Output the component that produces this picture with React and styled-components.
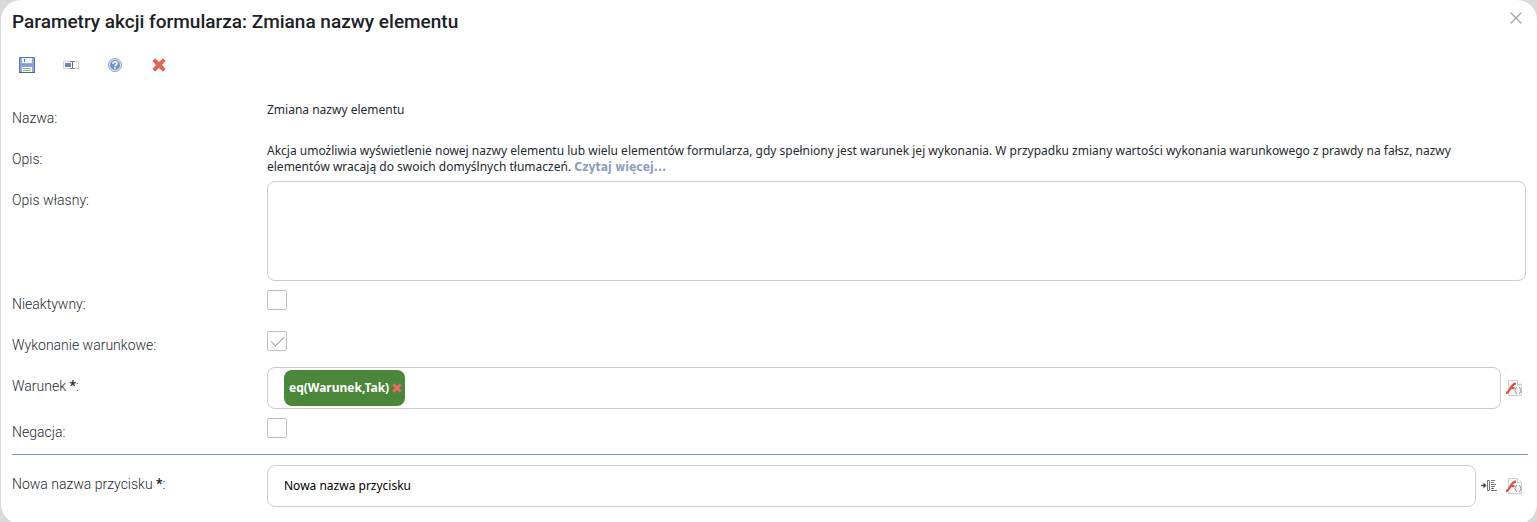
import React, { useState } from 'react';
import styled, { createGlobalStyle } from 'styled-components';

const GlobalStyle = createGlobalStyle`
  * {
    box-sizing: border-box;
  }

  body {
    margin: 0;
    background-color: #d9d9d9;
    color: #252a2e;
    font-family: 'Noto Sans', Tahoma, sans-serif;
    font-size: 12px;
    line-height: 16px;
  }
`;

const Dialog = styled.main`
  min-height: 100vh;
  margin-left: 1px;
  padding: 9px 9px 15px 11px;
  border-radius: 20px;
  background-color: #fff;
`;

const Header = styled.header`
  display: flex;
  justify-content: space-between;
  align-items: flex-start;
`;

const Title = styled.h1`
  margin: 0;
  font-family: Roboto, sans-serif;
  font-size: 19px;
  font-weight: 500;
  line-height: 26px;
  color: #1c2126;
`;

const IconButton = styled.button`
  display: flex;
  flex: none;
  padding: 0;
  border: 0;
  background: none;
  cursor: pointer;
`;

const CloseButton = styled(IconButton)`
  margin: 1px 4px;
`;

const Toolbar = styled.div`
  display: flex;
  gap: 28px;
  padding: 22px 7px 24px;
`;

const Row = styled.div`
  display: grid;
  grid-template-columns: 255px 1fr;
  min-height: 41px;
`;

const Label = styled.label`
  padding-top: 11px;
  font-family: Roboto, sans-serif;
  font-size: 14px;
  font-weight: 300;
  line-height: 20px;
`;

const Required = styled.b`
  font-weight: 700;
`;

const Value = styled.div`
  padding: 5px 24px 0 0;
`;

const Link = styled.a`
  color: #8a9fbe;
  font-family: 'DejaVu Sans Condensed', Verdana, sans-serif;
  font-weight: 700;
  line-height: 12px;
  text-decoration: none;
`;

const Field = styled.div`
  display: flex;
  align-items: center;
  gap: 9px;
  padding: 2px 6px 2px 0;
`;

const AreaField = styled.div`
  padding: 2px 2px 2px 0;
`;

const TextArea = styled.textarea`
  display: block;
  width: 100%;
  height: 100px;
  padding: 8px 16px;
  border: 1px solid #ccc;
  border-radius: 8px;
  font: inherit;
  resize: none;
`;

const Box = styled.div`
  display: flex;
  flex: 1;
  align-items: center;
  height: 42px;
  margin-right: -4px;
  padding: 0 16px;
  border: 1px solid #ccc;
  border-radius: 8px;
`;

const TextInput = styled.input`
  flex: 1;
  min-width: 0;
  padding: 0;
  border: 0;
  outline: 0;
  background: none;
  color: #000;
  font: inherit;
`;

const Chip = styled.span`
  display: flex;
  align-items: center;
  gap: 3px;
  height: 36px;
  padding: 0 3px 0 5px;
  border-radius: 8px;
  background-color: #4a873a;
  color: #fff;
  font-weight: 700;
`;

const CheckCell = styled.div`
  padding-top: 7px;
`;

const Checkbox = styled.input`
  display: grid;
  place-items: center;
  width: 20px;
  height: 20px;
  margin: 0;
  border: 1px solid #bfbfbf;
  border-radius: 2px;
  appearance: none;

  &:checked::before {
    content: '';
    width: 12px;
    height: 6px;
    margin-bottom: 4px;
    border: solid #a0a0a0;
    border-width: 0 0 1px 1px;
    transform: rotate(-45deg);
  }
`;

const Divider = styled.hr`
  height: 1px;
  margin: 2px 0 8px;
  border: 0;
  background-color: #8299bf;
`;

function CloseIcon() {
  return (
    <svg width="16" height="16" viewBox="0 0 16 16" fill="none" stroke="#a8a8a8" strokeWidth="1.4">
      <path d="M2.5 2.5 13.5 13.5M13.5 2.5 2.5 13.5" />
    </svg>
  );
}

function SaveIcon() {
  return (
    <svg width="16" height="16" viewBox="0 0 16 16">
      <path d="M1 0h14q1 0 1 1v14q0 1-1 1H1q-1 0-1-1V1q0-1 1-1z" fill="#5573bb" />
      <path d="M1 1h14v14H1z" fill="#8fa8de" />
      <path d="M3 1h10v5H3z" fill="#f4f7fd" />
      <path d="M5 2h1v3H5z" fill="#4b6cb9" />
      <path d="M2 7h12v2H2z" fill="#7f9ad6" />
      <path d="M3 10h10v5H3z" fill="#fafcf8" />
      <path d="M4 11h8v1H4zM4 13h8v1H4z" fill="#8fbf62" />
      <path d="M0 15h16v1H0z" fill="#4262ac" />
    </svg>
  );
}

function RenameIcon() {
  return (
    <svg width="16" height="16" viewBox="0 0 16 16">
      <path d="M.5 4.5h15v7H.5z" fill="#fff" stroke="#d0d0d0" />
      <path d="M2 6h6v4H2z" fill="#6683c2" />
      <path d="M7.5 4.5h1.5l.5.5.5-.5h1.5M9.5 5v6M7.5 11.5h1.5l.5-.5.5.5h1.5" fill="none" stroke="#666" />
    </svg>
  );
}

function HelpIcon() {
  return (
    <svg width="16" height="16" viewBox="0 0 16 16">
      <circle cx="8" cy="8" r="6.5" fill="#dde6f4" stroke="#8da1c6" />
      <circle cx="8" cy="8" r="5" fill="#7391c9" />
      <path d="M6 6.7C6 4.2 10 4.2 10 6.5 10 7.8 8 7.8 8 9.3" fill="none" stroke="#fff" strokeWidth="1.6" />
      <path d="M7.2 10.3h1.6v1.5H7.2z" fill="#fff" />
    </svg>
  );
}

function DeleteIcon({ size = 16, color = '#e2645b', edge = '#cf4a43', viewBox = '0 0 16 16' }) {
  return (
    <svg width={size} height={size} viewBox={viewBox}>
      <path
        d="M4 1.8 8 5.4 12 1.8 14.2 4 10.6 8 14.2 12 12 14.2 8 10.6 4 14.2 1.8 12 5.4 8 1.8 4z"
        fill={color}
        stroke={edge}
        strokeWidth=".7"
        strokeLinejoin="round"
      />
    </svg>
  );
}

function FunctionIcon() {
  return (
    <svg width="16" height="16" viewBox="0 0 16 16" fill="none">
      <path d="M2.5.5h9l4 4v11h-13z" fill="#f7f7f7" stroke="#cfcfcf" />
      <path d="M11.5.5v4h4" fill="#fff" stroke="#cfcfcf" />
      <path d="M0 13.2C4.5 12.8 4 3.6 10 3.6M4.5 8.2h4" stroke="#d9504a" strokeWidth="2.2" />
      <path
        d="M11 7.5c-2 0-1 2.5-2.2 3 1.2.5.2 3 2.2 3M13 7.5c2 0 1 2.5 2.2 3-1.2.5-.2 3-2.2 3"
        stroke="#909090"
      />
    </svg>
  );
}

function InsertIcon() {
  return (
    <svg width="16" height="16" viewBox="0 0 16 16" fill="none" stroke="#777">
      <path d="M0 7.5h4" stroke="#444" strokeWidth="1.4" />
      <path d="M2.5 4.5 5.5 7.5 2.5 10.5z" fill="#444" stroke="none" />
      <path d="M6.5 2.5h2v10h-2z" />
      <path d="M10 2.5h4M10 4.5h3M10 6.5h5M10 8.5h4M10 10.5h3M10 12.5h6" />
    </svg>
  );
}

function CheckRow({ id, label, checked = false }) {
  const [value, setValue] = useState(checked);

  return (
    <Row>
      <Label htmlFor={id}>{label}</Label>
      <CheckCell>
        <Checkbox id={id} type="checkbox" checked={value} onChange={(e) => setValue(e.target.checked)} />
      </CheckCell>
    </Row>
  );
}

function App() {
  const [hasCondition, setHasCondition] = useState(true);

  return (
    <>
      <GlobalStyle />
      <Dialog>
        <Header>
          <Title>Parametry akcji formularza: Zmiana nazwy elementu</Title>
          <CloseButton type="button">
            <CloseIcon />
          </CloseButton>
        </Header>
        <Toolbar>
          <IconButton type="button"><SaveIcon /></IconButton>
          <IconButton type="button"><RenameIcon /></IconButton>
          <IconButton type="button"><HelpIcon /></IconButton>
          <IconButton type="button"><DeleteIcon /></IconButton>
        </Toolbar>
        <Row>
          <Label as="span">Nazwa:</Label>
          <Value>Zmiana nazwy elementu</Value>
        </Row>
        <Row>
          <Label as="span">Opis:</Label>
          <Value>
            Akcja umożliwia wyświetlenie nowej nazwy elementu lub wielu elementów formularza, gdy spełniony jest
            warunek jej wykonania. W przypadku zmiany wartości wykonania warunkowego z prawdy na fałsz, nazwy
            elementów wracają do swoich domyślnych tłumaczeń. <Link href="#">Czytaj więcej...</Link>
          </Value>
        </Row>
        <Row>
          <Label htmlFor="description">Opis własny:</Label>
          <AreaField>
            <TextArea id="description" />
          </AreaField>
        </Row>
        <CheckRow id="inactive" label="Nieaktywny:" />
        <CheckRow id="conditional" label="Wykonanie warunkowe:" checked />
        <Row>
          <Label htmlFor="condition">
            Warunek <Required>*</Required>:
          </Label>
          <Field>
            <Box>
              {hasCondition && (
                <Chip>
                  eq(Warunek,Tak)
                  <IconButton type="button" onClick={() => setHasCondition(false)}>
                    <DeleteIcon size={10} color="#f26b66" edge="#e8605b" viewBox="1 1 14 14" />
                  </IconButton>
                </Chip>
              )}
              <TextInput id="condition" type="text" />
            </Box>
            <IconButton type="button"><FunctionIcon /></IconButton>
          </Field>
        </Row>
        <CheckRow id="negation" label="Negacja:" />
        <Divider />
        <Row>
          <Label htmlFor="button-name">
            Nowa nazwa przycisku <Required>*</Required>:
          </Label>
          <Field>
            <Box>
              <TextInput id="button-name" type="text" defaultValue="Nowa nazwa przycisku" />
            </Box>
            <IconButton type="button"><InsertIcon /></IconButton>
            <IconButton type="button"><FunctionIcon /></IconButton>
          </Field>
        </Row>
      </Dialog>
    </>
  );
}

export default App;
